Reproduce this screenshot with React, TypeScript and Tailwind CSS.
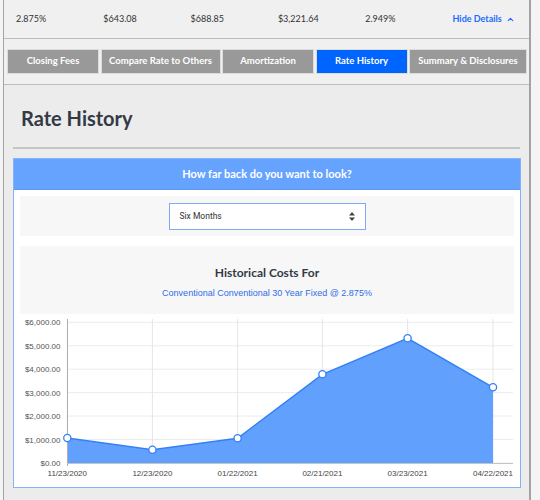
import { ChevronUp } from "lucide-react";

const summary = ["2.875%", "$643.08", "$688.85", "$3,221.64", "2.949%"];

const tabs = [
  { name: "Closing Fees", w: "w-[92px]" },
  { name: "Compare Rate to Others", w: "w-[120px]" },
  { name: "Amortization", w: "w-[92px]" },
  { name: "Rate History", w: "w-[92px]", active: true },
  { name: "Summary & Disclosures", w: "w-[118px]" },
];

const xs = [47.3, 132.4, 217.6, 302.4, 387.6, 473];
const ys = [124, 135.7, 124.3, 60.3, 24.3, 73.3];
const dates = ["11/23/2020", "12/23/2020", "01/22/2021", "02/21/2021", "03/23/2021", "04/22/2021"];
const yTicks = ["$0.00", "$1,000.00", "$2,000.00", "$3,000.00", "$4,000.00", "$5,000.00", "$6,000.00"];

const Chart = () => {
  const base = 149;
  const step = 23.45;
  const line = xs.map((x, i) => `${x},${ys[i]}`).join(" ");
  const area = `M${xs[0]},${base} L${line.split(" ").join(" L")} L${xs[5]},${base} Z`;

  return (
    <svg width="493" height="172" className="block" style={{ fontFamily: '"Liberation Sans", Arial, sans-serif' }}>
      {yTicks.map((_, i) => (
        <line key={i} x1="47" x2="493" y1={base - i * step} y2={base - i * step} stroke="#ececec" strokeWidth="1" />
      ))}
      {xs.map((x, i) => (
        <line key={i} x1={x} x2={x} y1="5" y2={base} stroke="#e6e6e6" strokeWidth="1" />
      ))}
      <path d={area} fill="#62a0fe" />
      <polyline points={line} fill="none" stroke="#3580f4" strokeWidth="1.5" />
      <line x1="47.5" x2="47.5" y1="5" y2="152" stroke="#b0b0b0" strokeWidth="1" />
      <line x1="47" x2="493" y1={base + 0.5} y2={base + 0.5} stroke="#c4c4c4" strokeWidth="1" />
      {xs.map((x, i) => (
        <circle key={i} cx={x} cy={ys[i]} r="3.6" fill="#fff" stroke="#3580f4" strokeWidth="1.3" />
      ))}
      {yTicks.map((t, i) => (
        <text key={t} x="40.5" y={base - i * step + 3} textAnchor="end" fontSize="8" fill="#555">
          {t}
        </text>
      ))}
      {dates.map((d, i) => (
        <text key={d} x={xs[i]} y="162" textAnchor="middle" fontSize="8" fill="#444">
          {d}
        </text>
      ))}
    </svg>
  );
};

export default function App() {
  return (
    <div className="w-[540px] h-[500px] overflow-hidden bg-[#f4f4f4] font-['Lato',sans-serif]">
      <div className="ml-[3px] w-[528px] h-[500px] border-l border-r-2 border-[#a3a3a3] bg-[#ececec]">
        {/* summary row */}
        <div className="h-[39px] flex items-center pl-[12px] bg-[#f0f0f0] border-b border-[#bcbcbc] text-[9px] text-[#333]">
          {summary.map((s) => (
            <div key={s} className="w-[87.3px]">
              {s}
            </div>
          ))}
          <div className="flex items-center gap-[4px] font-bold text-[#1c6bff]">
            Hide Details
            <ChevronUp size={9} strokeWidth={3} />
          </div>
        </div>

        {/* tabs */}
        <div className="h-[46px] pt-[10px] pl-[3px] bg-[#f0f0f0] border-b border-[#bcbcbc]">
          <div className="flex gap-[1.5px]">
            {tabs.map((t) => (
              <div
                key={t.name}
                className={`${t.w} h-[25px] flex items-center justify-center text-[9.5px] font-bold text-white border border-[#dcdcdc] ${
                  t.active ? "bg-[#0064fe]" : "bg-[#999999]"
                }`}
              >
                {t.name}
              </div>
            ))}
          </div>
        </div>

        {/* content */}
        <div className="px-[9px]">
          <h1 className="pt-[21px] pl-[8px] h-[62px] text-[20px] leading-[24px] font-bold text-[#333a45]">Rate History</h1>
          <div className="h-[2px] bg-[#c6c6c6]" />

          <div className="mt-[9px] w-[508px] border border-[#86b1fb] bg-white">
            <div className="h-[31px] flex items-center justify-center bg-[#66a3ff] border-b border-[#5b97f3] text-[11px] font-bold text-white">
              How far back do you want to look?
            </div>
            <div className="px-[6px] pt-[6px] pb-[1px]">
              <div className="h-[40px] flex items-center justify-center bg-[#f7f7f7]">
                <div className="w-[197px] h-[27px] flex items-center justify-between pl-[10px] pr-[10px] bg-white border border-[#80abf4] text-[8.5px] text-[#333] font-['Roboto',sans-serif]">
                  Six Months
                  <svg width="6" height="9" viewBox="0 0 6 9">
                    <path d="M3 0 L6 3.5 L0 3.5 Z M3 9 L6 5.5 L0 5.5 Z" fill="#444" />
                  </svg>
                </div>
              </div>
              <div className="mt-[10px] h-[68px] flex flex-col items-center bg-[#f7f7f7]">
                <div className="mt-[19px] text-[12px] leading-[16px] font-bold text-[#333a45]">Historical Costs For</div>
                <div className="mt-[6px] text-[9px] leading-[12px] text-[#2f6ee6] font-['Liberation_Sans',Arial,sans-serif]">
                  Conventional Conventional 30 Year Fixed @ 2.875%
                </div>
              </div>
              <Chart />
            </div>
          </div>
        </div>
      </div>
    </div>
  );
}
